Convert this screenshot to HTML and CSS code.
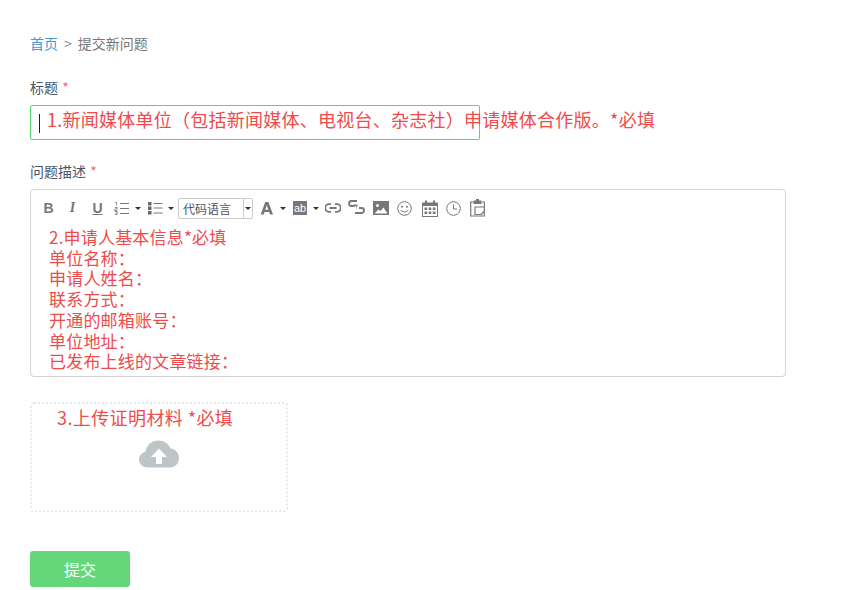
FILE: index.html
```html
<!DOCTYPE html>
<html lang="zh-CN">
<head>
  <meta charset="UTF-8" />
  <title>提交新问题</title>
  <link rel="stylesheet" href="styles.css">
</head>
<body>
  <div class="breadcrumb">
    <a href="#">首页</a><span class="sep">&gt;</span><span class="current">提交新问题</span>
  </div>

  <div class="field field-title">
    <label>标题 <span class="req">*</span></label>
    <div class="title-wrap">
      <div class="title-input"><span class="caret"></span></div>
      <div class="note note-title">1.新闻媒体单位（包括新闻媒体、电视台、杂志社）申请媒体合作版。*必填</div>
    </div>
  </div>

  <div class="field field-desc">
    <label>问题描述 <span class="req">*</span></label>
    <div class="editor">
      <div class="toolbar">
        <span class="tool tool-b">B</span>
        <span class="tool tool-i">I</span>
        <span class="tool tool-u">U</span>
        <svg class="ico ico-ol" width="16" height="14" viewBox="0 0 16 14">
          <path d="M1 1.500h1.500v3M0.800 6.500h2.400v1.500h-2.400v1.500h2.400M0.800 10.500h2.400v3h-2.400M1.500 12h1.500" fill="none" stroke="#777" stroke-width=".8"/>
          <path d="M6 2.500h9M6 7.500h9M6 12.500h9" stroke="#777" stroke-width="1"/>
        </svg>
        <i class="arrow arrow-ol"></i>
        <svg class="ico ico-ul" width="15" height="14" viewBox="0 0 15 14">
          <path d="M0 1h3.500v3.500H0zM0 5.500h3.500V9H0zM0 10h3.500v3.500H0z" fill="#666"/>
          <path d="M5.500 2.500h9M5.500 7h9M5.500 12h9" stroke="#777" stroke-width="1"/>
        </svg>
        <i class="arrow arrow-ul"></i>
        <div class="code-select"><span class="code-label">代码语言</span><span class="code-btn"><i class="arrow"></i></span></div>
        <svg class="ico ico-a" width="14" height="14" viewBox="0 0 14 14">
          <path d="M5.200 1h3.200L13 13.500H9.900L9.100 11H4.500l-.8 2.500H.7zM6.800 4.200 5.300 8.700h3z" fill="#777" fill-rule="evenodd"/>
        </svg>
        <i class="arrow arrow-a"></i>
        <span class="tool-ab">ab</span>
        <i class="arrow arrow-ab"></i>
        <svg class="ico ico-link" width="16" height="10" viewBox="0 0 16 10">
          <path d="M6 1.200H4a3.800 3.800 0 0 0 0 7.600h2M10 1.200h2a3.800 3.800 0 0 1 0 7.600h-2M4.500 5h7" fill="none" stroke="#777" stroke-width="1.800"/>
        </svg>
        <svg class="ico ico-unlink" width="17" height="14" viewBox="0 0 17 14">
          <path d="M9 1H3.500a2.500 2.500 0 0 0 0 5H6M8 7.500h.5M11 8h2.500a2.500 2.500 0 0 1 0 5H7" fill="none" stroke="#777" stroke-width="1.800"/>
          <path d="M6 4.500h3.500v2H6z" fill="#777"/>
        </svg>
        <svg class="ico ico-image" width="16" height="14" viewBox="0 0 16 14">
          <path d="M0 0h16v14H0zM1.500 12.500h13l-4-6-3 3.500-2-1.500zM4.500 3A1.500 1.500 0 1 0 4.500 6 1.500 1.500 0 0 0 4.500 3z" fill="#777" fill-rule="evenodd"/>
        </svg>
        <svg class="ico ico-smile" width="15" height="15" viewBox="0 0 15 15">
          <circle cx="7.500" cy="7.500" r="6.800" fill="none" stroke="#777"/>
          <circle cx="5" cy="5.800" r="1" fill="#777"/><circle cx="10" cy="5.800" r="1" fill="#777"/>
          <path d="M3.800 9c1 2.500 6.400 2.500 7.400 0" fill="none" stroke="#777"/>
        </svg>
        <svg class="ico ico-cal" width="16" height="17" viewBox="0 0 16 17">
          <path d="M0 2.500h3V.500h2v2h6V.500h2v2h3V17H0zM1 6v10h14V6z" fill="#777" fill-rule="evenodd"/>
          <path d="M2.500 7.500h2.700V10H2.500zM6.700 7.500h2.600V10H6.700zM10.800 7.500h2.700V10h-2.700zM2.500 11.500h2.700V14H2.500zM6.700 11.500h2.600V14H6.700zM10.800 11.500h2.700V14h-2.700z" fill="#777"/>
        </svg>
        <svg class="ico ico-clock" width="15" height="15" viewBox="0 0 15 15">
          <circle cx="7.500" cy="7.500" r="6.800" fill="none" stroke="#777"/>
          <path d="M7.500 3.500v4.500h3.500" fill="none" stroke="#777"/>
        </svg>
        <svg class="ico ico-paste" width="15" height="18" viewBox="0 0 15 18">
          <path d="M3.500 3H.700v14h13.600V3h-2.800" fill="none" stroke="#777" stroke-width="1.200"/>
          <path d="M3.500 1.500H6V0h3v1.500h2.500V5h-8z" fill="#777"/>
          <path d="M5 8h9.300v4l-3 3.500H5z" fill="#fff" stroke="#777" stroke-width="1.200"/>
        </svg>
      </div>
      <div class="editor-body">
        <div>2.申请人基本信息*必填</div>
        <div>单位名称：</div>
        <div>申请人姓名：</div>
        <div>联系方式：</div>
        <div>开通的邮箱账号：</div>
        <div>单位地址：</div>
        <div>已发布上线的文章链接：</div>
      </div>
    </div>
  </div>

  <div class="upload">
    <div class="note note-upload">3.上传证明材料 *必填</div>
    <svg class="cloud" width="40" height="28" viewBox="0 0 40 28">
      <path d="M9 27.500C4 27.500 0 24 0 19.500c0-4 3-7 6.500-7.800C7.500 5 13 .5 19.500.5c5.500 0 10 3 12 8 4.800.3 8.500 4.500 8.500 9.500 0 5.500-4 9.500-9 9.500z" fill="#bdc5c9"/>
      <path d="M20 8.500 28 17h-5v7h-6v-7h-5z" fill="#fff"/>
    </svg>
  </div>

  <button class="submit" type="button">提交</button>
</body>
</html>
```

FILE: styles.css
```css
* {
  margin: 0;
  padding: 0;
  box-sizing: border-box;
}

html, body {
  height: 590px;
  overflow: hidden;
}

body {
  font-family: "Noto Sans CJK SC", "Liberation Sans", sans-serif;
  font-size: 14px;
  color: #4a5568;
  background: #fff;
  padding: 33px 30px 0;
}

.breadcrumb {
  height: 20px;
  line-height: 20px;
  color: #777;
}

.breadcrumb a {
  color: #4299d8;
  text-decoration: none;
}

.breadcrumb .sep {
  margin: 0 6px;
  color: #888;
}

.field label {
  display: block;
  height: 20px;
  line-height: 20px;
  color: #4a5568;
}

.req {
  margin-left: 1px;
  color: #ec6a70;
}

.field-title {
  margin-top: 24px;
}

.title-wrap {
  position: relative;
  margin-top: 8px;
}

.title-input {
  width: 450px;
  height: 35px;
  border: 1px solid #58d676;
  border-radius: 2px;
  padding: 8px 8px;
}

.caret {
  display: block;
  width: 1px;
  height: 19px;
  background: #222;
}

.note {
  position: absolute;
  color: #f04b4b;
  white-space: nowrap;
  font-size: 18px;
  letter-spacing: .25px;
}

.note-title {
  left: 17px;
  top: 1px;
  line-height: 26px;
}

.field-desc {
  margin-top: 21px;
}

.editor {
  margin-top: 8px;
  width: 756px;
  height: 188px;
  border: 1px solid #d4d4d4;
  border-radius: 4px;
}

.toolbar {
  display: flex;
  align-items: center;
  height: 36px;
  padding-left: 12px;
}

.tool {
  width: 11px;
  font-family: "Liberation Sans", sans-serif;
  font-size: 14px;
  font-weight: bold;
  color: #777;
  text-align: center;
  line-height: 14px;
}

.tool-i {
  margin-left: 13px;
  font-style: italic;
  font-family: "Liberation Serif", serif;
}

.tool-u {
  margin-left: 14px;
  text-decoration: underline;
}

.ico {
  flex: none;
}

.ico-ol { margin-left: 11px; }
.ico-ul { margin-left: 7px; }
.ico-a { margin-left: 7px; }
.ico-link { margin-left: 6px; }
.ico-unlink { margin-left: 7px; margin-bottom: 2px; }
.ico-image { margin-left: 8px; }
.ico-smile { margin-left: 8px; }
.ico-cal { margin-left: 10px; }
.ico-clock { margin-left: 8px; }
.ico-paste { margin-left: 9px; }

.arrow {
  display: block;
  flex: none;
  width: 0;
  height: 0;
  border-left: 3px solid transparent;
  border-right: 3px solid transparent;
  border-top: 3px solid #333;
}

.arrow-ol, .arrow-ul { margin-left: 5px; }
.arrow-ul { margin-right: -1px; }
.arrow-a, .arrow-ab { margin-left: 6px; }

.code-select {
  display: flex;
  width: 75px;
  height: 21px;
  margin-left: 5px;
  border: 1px solid #ccc;
  border-radius: 2px;
}

.code-label {
  width: 65px;
  padding-left: 4px;
  font-size: 12px;
  line-height: 20px;
  color: #4a5568;
}

.code-btn {
  display: flex;
  align-items: center;
  justify-content: center;
  width: 9px;
  border-left: 1px solid #ccc;
}

.tool-ab {
  width: 14px;
  height: 14px;
  margin-left: 7px;
  background: #777;
  color: #fff;
  font-family: "Liberation Sans", sans-serif;
  font-size: 11px;
  line-height: 14px;
  text-align: center;
}

.editor-body {
  padding: 1px 0 0 18px;
  font-size: 17px;
  line-height: 20.7px;
  letter-spacing: .2px;
  color: #f04b4b;
}

.upload {
  position: relative;
  display: flex;
  justify-content: center;
  width: 258px;
  height: 110px;
  margin-top: 25px;
  border: 2px dotted #e4eaec;
  border-radius: 4px;
  padding-top: 36px;
}

.note-upload {
  left: 25px;
  top: 0;
  line-height: 26px;
  letter-spacing: .4px;
}

.cloud {
  display: block;
}

.submit {
  display: block;
  width: 100px;
  height: 36px;
  margin-top: 39px;
  background: #65d679;
  border: none;
  border-radius: 3px;
  color: #fff;
  font-family: inherit;
  font-size: 16px;
}
```
